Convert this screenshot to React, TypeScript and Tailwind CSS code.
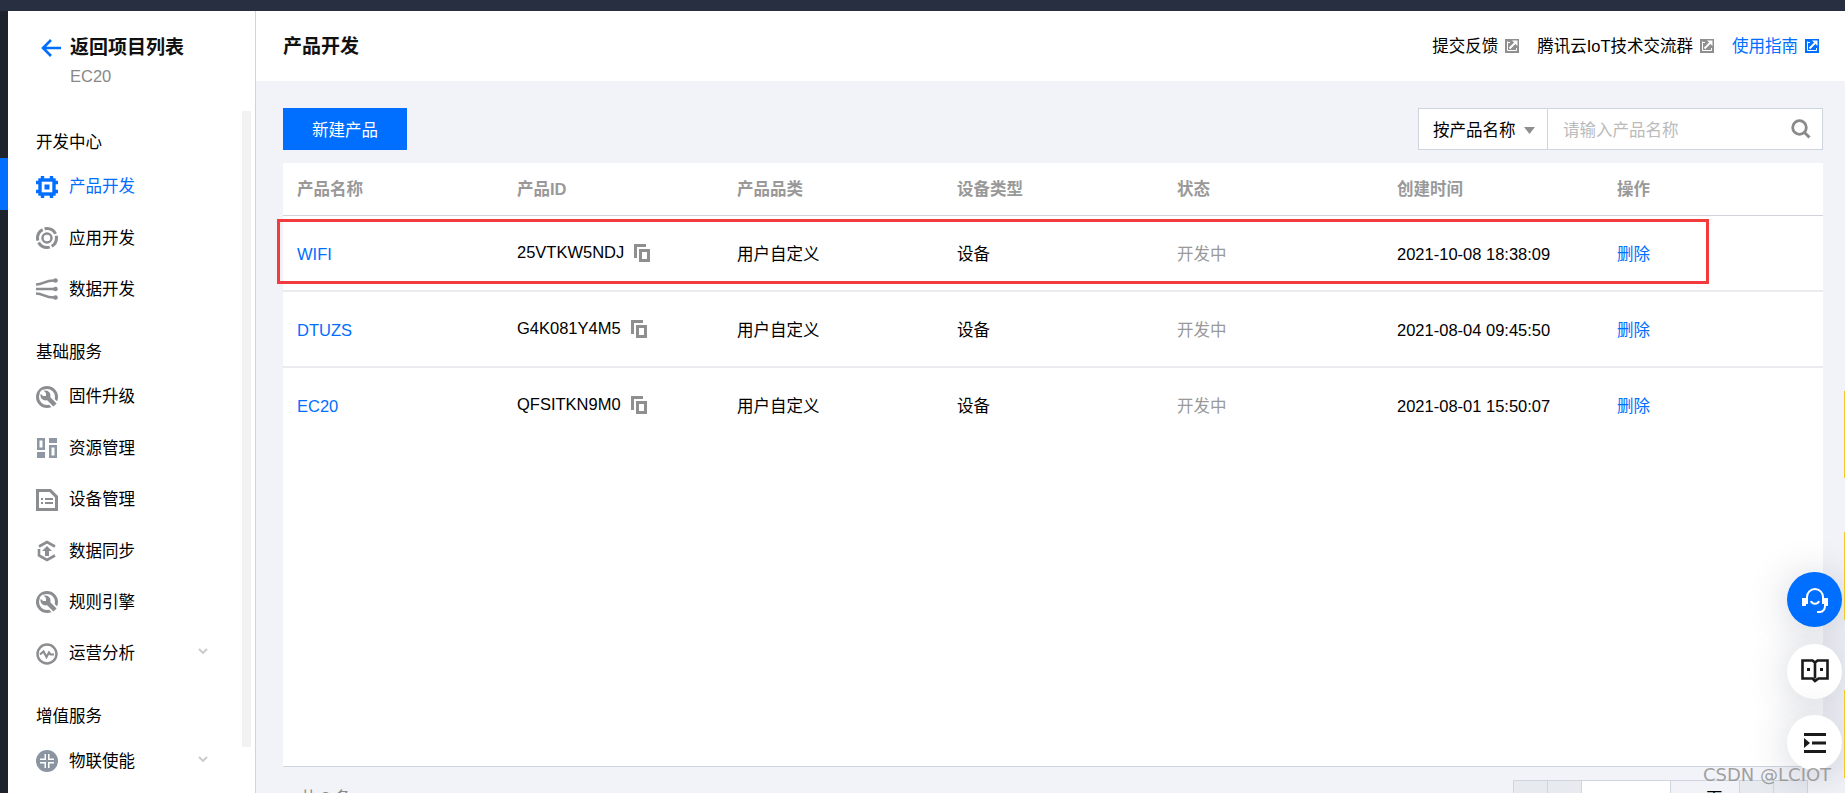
import React from 'react';

const GRAY = '#8b8d90';

function ChipIcon() {
  return (
    <svg width="22" height="22" viewBox="0 0 22 22" fill="none">
      <rect x="4" y="4" width="14" height="14" stroke="#006eff" strokeWidth="3.400" />
      <rect x="8.500" y="8.500" width="5" height="5" fill="#006eff" />
      <path d="M6.500 0v4M15.500 0v4M6.500 18v4M15.500 18v4M0 6.500h4M0 15.500h4M18 6.500h4M18 15.500h4" stroke="#006eff" strokeWidth="3.400" />
    </svg>
  );
}

function AppIcon() {
  return (
    <svg width="22" height="22" viewBox="0 0 22 22" fill="none" stroke={GRAY}>
      <circle cx="11" cy="11" r="9.500" strokeWidth="3" strokeDasharray="13 2" strokeDashoffset="3" />
      <circle cx="11" cy="11" r="4.500" strokeWidth="2.400" />
    </svg>
  );
}

function DataIcon() {
  return (
    <svg width="22" height="22" viewBox="0 0 22 22" fill="none" stroke={GRAY} strokeWidth="2.600">
      <path d="M0 6.500c8 0 8-4 18-4M0 11h18M0 15.500c8 0 8 4 18 4" />
      <circle cx="19.500" cy="2.500" r="2.300" fill={GRAY} stroke="none" />
      <circle cx="19.500" cy="11" r="2.300" fill={GRAY} stroke="none" />
      <circle cx="19.500" cy="19.500" r="2.300" fill={GRAY} stroke="none" />
    </svg>
  );
}

function WrenchIcon() {
  return (
    <svg width="22" height="22" viewBox="0 0 22 22" fill="none">
      <circle cx="11" cy="11" r="9.500" stroke={GRAY} strokeWidth="3" />
      <path d="M9 9l11 11" stroke="#fff" strokeWidth="8" />
      <path d="M9 9l10 10" stroke={GRAY} strokeWidth="4.500" />
      <circle cx="9.500" cy="9.500" r="5" fill={GRAY} />
      <path d="M6.500 3.500l3.500 3.500v3H7L3.500 6.500z" fill="#fff" />
    </svg>
  );
}

function ResourceIcon() {
  return (
    <svg width="22" height="22" viewBox="0 0 22 22" fill="none">
      <path d="M1 1h8v12H1zM3.500 3.500v7h3v-7zM13 1h8v5h-8zM1 15h8v6H1zM13 8h8v13h-8zM15.500 10.500v8h3v-8z" fill="#8d98a4" fillRule="evenodd" />
    </svg>
  );
}

function DeviceIcon() {
  return (
    <svg width="22" height="22" viewBox="0 0 22 22" fill="none">
      <path d="M0 0h15l7 7v15H0zM3 3v16h16V8.500L13.500 3z" fill={GRAY} fillRule="evenodd" />
      <path d="M5 9h2v2H5zM9 9h8v2H9zM5 13h2v2H5zM9 13h8v2H9z" fill={GRAY} />
    </svg>
  );
}

function SyncIcon() {
  return (
    <svg width="22" height="22" viewBox="0 0 22 22" fill="none">
      <path d="M3 6.500L11 2l8 4.500M19 15.500L11 20l-8-4.500V9" stroke={GRAY} strokeWidth="2.600" />
      <path d="M11 6l5 5h-3v5H9v-5H6z" fill={GRAY} />
    </svg>
  );
}

function PulseIcon() {
  return (
    <svg width="22" height="22" viewBox="0 0 22 22" fill="none" stroke={GRAY}>
      <circle cx="11" cy="11" r="9.500" strokeWidth="2.400" />
      <path d="M4 11.500l3.500-3 3 5.500 2.500-4.500 1.500 2H18" strokeWidth="2.200" />
    </svg>
  );
}

function PlusCircleIcon() {
  return (
    <svg width="22" height="22" viewBox="0 0 22 22" fill="none">
      <circle cx="11" cy="11" r="11" fill="#8b95a1" />
      <path d="M8.500 4h5v4.500H18v5h-4.500V18h-5v-4.500H4v-5h4.500z" fill="#fff" />
      <rect x="10" y="2" width="2" height="18" fill="#8b95a1" />
      <rect x="2" y="10" width="18" height="2" fill="#8b95a1" />
    </svg>
  );
}

function Chevron() {
  return (
    <svg width="10" height="7" viewBox="0 0 10 7" fill="none" className="ml-auto mr-[47px] -mt-[4px]">
      <path d="M1 1l4 4 4-4" stroke="#c9c9c9" strokeWidth="1.800" />
    </svg>
  );
}

function ExternalIcon({ color }: { color: string }) {
  return (
    <svg width="14" height="14" viewBox="0 0 14 14" className="ml-[7px]">
      <path d="M0 0h14v14H0z" fill={color} />
      <path d="M4.500 9.500L10 4" stroke="#fff" strokeWidth="2" />
      <path d="M7 1.500h5.500V7z" fill="#fff" />
      <path d="M2.500 3.500h2.500M2.500 2.500v9h9V9" stroke="#fff" strokeWidth="1" fill="none" />
    </svg>
  );
}

function CopyIcon() {
  return (
    <svg width="16" height="18" viewBox="0 0 16 18" className="ml-[10px] -mt-[2px]">
      <path d="M0 0h12v3H3v11H0z" fill="#8f8f8f" />
      <path d="M5 5h11v13H5zM8 8v7h5V8z" fill="#8f8f8f" fillRule="evenodd" />
    </svg>
  );
}

type MenuItem = { label: string; icon: React.ReactNode; active?: boolean; more?: boolean };

const groups: { title: string; gap: string; items: MenuItem[] }[] = [
  {
    title: '开发中心',
    gap: 'mt-0',
    items: [
      { label: '产品开发', icon: <ChipIcon />, active: true },
      { label: '应用开发', icon: <AppIcon /> },
      { label: '数据开发', icon: <DataIcon /> },
    ],
  },
  {
    title: '基础服务',
    gap: 'mt-[16px]',
    items: [
      { label: '固件升级', icon: <WrenchIcon /> },
      { label: '资源管理', icon: <ResourceIcon /> },
      { label: '设备管理', icon: <DeviceIcon /> },
      { label: '数据同步', icon: <SyncIcon /> },
      { label: '规则引擎', icon: <WrenchIcon /> },
      { label: '运营分析', icon: <PulseIcon />, more: true },
    ],
  },
  {
    title: '增值服务',
    gap: 'mt-[16px]',
    items: [{ label: '物联使能', icon: <PlusCircleIcon />, more: true }],
  },
];

const columns = ['产品名称', '产品ID', '产品品类', '设备类型', '状态', '创建时间', '操作'];

const products = [
  { name: 'WIFI', id: '25VTKW5NDJ', time: '2021-10-08 18:38:09' },
  { name: 'DTUZS', id: 'G4K081Y4M5', time: '2021-08-04 09:45:50' },
  { name: 'EC20', id: 'QFSITKN9M0', time: '2021-08-01 15:50:07' },
];

function Sidebar() {
  return (
    <aside className="relative w-[248px] shrink-0 bg-white border-r border-[#d0d4de]">
      <div className="pl-[33px] pt-[25px]">
        <div className="flex items-center h-[24px]">
          <svg width="20" height="20" viewBox="0 0 20 20" fill="none">
            <path d="M10 2L2 10l8 8M2 10h18" stroke="#006eff" strokeWidth="2.600" />
          </svg>
          <span className="ml-[9px] text-[19px] font-bold text-[#111]">返回项目列表</span>
        </div>
        <div className="ml-[29px] mt-[6px] text-[16.5px] leading-[20px] text-[#888]">EC20</div>
      </div>
      <div className="mt-[35px]">
        {groups.map(group => (
          <div key={group.title} className={group.gap}>
            <div className="pt-[2px] pl-[28px] h-[40px] flex items-center text-[16.5px] text-black">{group.title}</div>
            {group.items.map(item => (
              <div key={item.label} className="flex items-center h-[51.400px] pl-[28px]">
                {item.icon}
                <span className={`ml-[11px] text-[16.5px] ${item.active ? 'text-[#006eff]' : 'text-black'}`}>{item.label}</span>
                {item.more && <Chevron />}
              </div>
            ))}
          </div>
        ))}
      </div>
      {/* scrollbar track */}
      <div className="absolute left-[234px] top-[100px] w-[9px] h-[636px] bg-[#f2f2f2]" />
    </aside>
  );
}

function ProductTable() {
  return (
    <div className="relative mt-[13px] h-[604px] bg-white border-b border-[#cfd5de]">
      {/* red highlight drawn over the first row */}
      <div className="absolute left-[-6px] top-[56px] w-[1432px] h-[65px] border-[3px] border-[#f33a3c]" />
      <div className="grid grid-cols-[repeat(7,220px)] h-[53px] items-center border-b border-[#d0d3da] text-[16.5px] font-bold text-[#999]">
        {columns.map(col => (
          <div key={col} className="pl-[14px]">{col}</div>
        ))}
      </div>
      {products.map(p => (
        <div key={p.id} className="grid grid-cols-[repeat(7,220px)] h-[76px] pt-[2px] items-center border-b-2 border-[#e9ebef] last:border-transparent text-[16.5px] text-black">
          <div className="pl-[14px] text-[#006eff]">{p.name}</div>
          <div className="pl-[14px] flex items-center">
            <span className="-mt-[4px]">{p.id}</span>
            <CopyIcon />
          </div>
          <div className="pl-[14px]">用户自定义</div>
          <div className="pl-[14px]">设备</div>
          <div className="pl-[14px] text-[#999]">开发中</div>
          <div className="pl-[14px]">{p.time}</div>
          <div className="pl-[14px] text-[#006eff]">删除</div>
        </div>
      ))}
    </div>
  );
}

function Pagination() {
  const cell = 'h-[40px] border border-[#cfd5de] -ml-px flex items-start pt-[6px] justify-center text-[16.5px]';
  return (
    <div className="flex items-start justify-between pl-[14px] pr-[15px] pt-[13px]">
      <div className="pl-[3px] pt-[6px] text-[16.5px] text-[#888]">共 3 条</div>
      <div className="flex">
        <div className={`${cell} w-[35px] bg-[#e7eaef] text-[#aaa]`}>|‹</div>
        <div className={`${cell} w-[35px] bg-[#e7eaef] text-[#aaa]`}>‹</div>
        <div className={`${cell} w-[90px] bg-white text-black`}>1</div>
        <div className={`${cell} w-[70px] text-black`}>/1 页</div>
        <div className={`${cell} w-[35px] bg-[#e7eaef] text-[#aaa]`}>›</div>
        <div className={`${cell} w-[35px] bg-[#e7eaef] text-[#aaa]`}>›|</div>
      </div>
    </div>
  );
}

function FloatButtons() {
  const circle = 'w-[55px] h-[55px] rounded-full flex items-center justify-center shadow-[0_4px_40px_rgba(40,50,80,0.22)]';
  return (
    <div className="absolute left-[1787px] top-[572px] flex flex-col gap-[16.500px]">
      <div className={`${circle} bg-[#006eff]`}>
        <svg width="28" height="28" viewBox="0 0 28 28" fill="none">
          <path d="M6 18V11a8 8 0 0 1 16 0v7" stroke="#fff" strokeWidth="2" />
          <path d="M1 12h4v8H1zM23 12h4v8h-4z" fill="#fff" />
          <path d="M10 15c1 3.500 7 3.500 8 0" stroke="#fff" strokeWidth="2" />
          <path d="M24 20c0 3-2 6-5 6h-3" stroke="#fff" strokeWidth="2" />
        </svg>
      </div>
      <div className={`${circle} bg-white`}>
        <svg width="28" height="24" viewBox="0 0 28 24" fill="none">
          <path d="M1.500 1.500h10l2.500 2 2.500-2h10v18h-9L14 22l-2.500-2.500h-10zM14 3.500v16" stroke="#1a1a1a" strokeWidth="2.600" />
          <path d="M6 9h3v3H6zM19 9h3v3h-3z" fill="#1a1a1a" />
        </svg>
      </div>
      <div className={`${circle} bg-white`}>
        <svg width="22" height="20" viewBox="0 0 22 20" fill="none">
          <path d="M0 0h22v3H0zM0 17h22v3H0zM8 8.500h14v3H8z" fill="#1a1a1a" />
          <path d="M0 5l6 5-6 5z" fill="#1a1a1a" />
        </svg>
      </div>
    </div>
  );
}

export default function App() {
  return (
    <div className="relative w-[1845px] h-[793px] overflow-hidden flex flex-col bg-[#f2f3f8] font-['Liberation_Sans','Noto_Sans_CJK_SC',sans-serif]">
      <div className="h-[11px] shrink-0 bg-[#272f40]" />
      <div className="flex flex-1 min-h-0">
        {/* dark rail */}
        <div className="w-[8px] shrink-0 bg-[#1e222d] pt-[147px]">
          <div className="h-[52px] bg-[#006eff]" />
        </div>
        <Sidebar />
        <main className="flex-1 min-w-0">
          <header className="flex items-center h-[70px] bg-white pl-[27px] pr-[26px]">
            <h1 className="pt-[2px] text-[19px] font-bold text-[#111]">产品开发</h1>
            <div className="ml-auto flex items-center text-[16.5px] text-black">
              <span>提交反馈</span>
              <ExternalIcon color="#8f8f8f" />
              <span className="ml-[18px]">腾讯云IoT技术交流群</span>
              <ExternalIcon color="#8f8f8f" />
              <span className="ml-[18px] text-[#006eff]">使用指南</span>
              <ExternalIcon color="#006eff" />
            </div>
          </header>
          <section className="pl-[27px] pr-[22px] pt-[27px]">
            <div className="flex items-center justify-between">
              <button className="w-[124px] h-[42px] pt-[2px] bg-[#006eff] text-white text-[16.5px]">新建产品</button>
              <div className="flex h-[42px] bg-white border border-[#cfd5de]">
                <div className="w-[129px] flex items-center pl-[14px] pt-[2px] border-r border-[#cfd5de] text-[16.5px] text-black">
                  按产品名称
                  <svg width="11" height="7" viewBox="0 0 11 7" className="ml-[8px]">
                    <path d="M0 0h11L5.500 7z" fill="#8f8f8f" />
                  </svg>
                </div>
                <div className="w-[274px] flex items-center pl-[15px] pr-[11px] pt-[2px] text-[16.5px] text-[#bbb]">
                  请输入产品名称
                  <svg width="20" height="20" viewBox="0 0 20 20" fill="none" className="ml-auto -mt-[2px]">
                    <circle cx="8.500" cy="8.500" r="6.800" stroke="#8a8a8a" strokeWidth="2.800" />
                    <path d="M13.500 13.500l5 5" stroke="#8a8a8a" strokeWidth="3" />
                  </svg>
                </div>
              </div>
            </div>
            <ProductTable />
            <Pagination />
          </section>
        </main>
      </div>
      <FloatButtons />
      {/* thin yellow marks on the right edge */}
      <div className="absolute left-[1844px] top-[391px] w-px h-[87px] bg-[#f5c52b]" />
      <div className="absolute left-[1844px] top-[532px] w-px h-[88px] bg-[#f5c52b]" />
      <div className="absolute left-[1844px] top-[690px] w-px h-[88px] bg-[#f5c52b]" />
      <div className="absolute left-[1703px] top-[764px] text-[18px] leading-[22px] text-[#8a8a8a]/80 font-['DejaVu_Sans',sans-serif]">CSDN @LCIOT</div>
    </div>
  );
}
